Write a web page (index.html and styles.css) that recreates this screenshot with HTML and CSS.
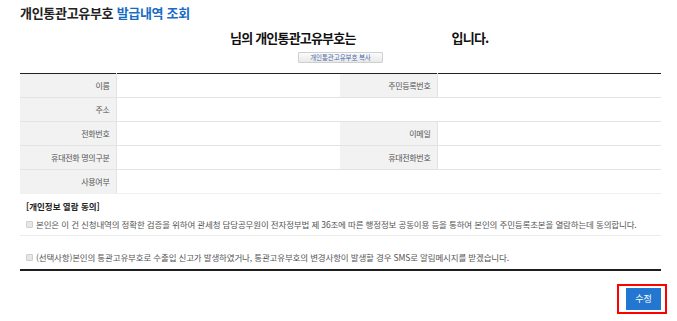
FILE: index.html
```html
<!DOCTYPE html>
<html lang="ko">
<head>
<meta charset="utf-8">
<title>개인통관고유부호 발급내역 조회</title>
<link rel="stylesheet" href="styles.css">
</head>
<body>
<div class="page">
  <h1 class="title">개인통관고유부호 <span class="title-blue">발급내역 조회</span></h1>

  <div class="summary">
    <div class="summary-line">
      <span class="summary-text">님의 개인통관고유부호는</span>
      <span class="summary-blank"></span>
      <span class="summary-text">입니다.</span>
    </div>
    <div class="copy-wrap"><button class="copy-btn" type="button">개인통관고유부호 복사</button></div>
  </div>

  <table class="info">
    <colgroup>
      <col class="col-label"><col class="col-value"><col class="col-label2"><col class="col-value">
    </colgroup>
    <tr>
      <th>이름</th><td></td>
      <th>주민등록번호</th><td></td>
    </tr>
    <tr>
      <th>주소</th><td colspan="3"></td>
    </tr>
    <tr>
      <th>전화번호</th><td></td>
      <th>이메일</th><td></td>
    </tr>
    <tr>
      <th>휴대전화 명의구분</th><td></td>
      <th>휴대전화번호</th><td></td>
    </tr>
    <tr class="last">
      <th>사용여부</th><td colspan="3"></td>
    </tr>
  </table>

  <div class="agree">
    <p class="agree-title">[개인정보 열람 동의]</p>
    <div class="agree-row agree-row-1">
      <span class="check"></span>
      <span class="agree-text">본인은 이 건 신청내역의 정확한 검증을 위하여 관세청 담당공무원이 전자정부법 제 36조에 따른 행정정보 공동이용 등을 통하여 본인의 주민등록초본을 열람하는데 동의합니다.</span>
    </div>
    <div class="agree-row agree-row-2">
      <span class="check"></span>
      <span class="agree-text">(선택사항)본인의 통관고유부호로 수출입 신고가 발생하였거나, 통관고유부호의 변경사항이 발생할 경우 SMS로 알림메시지를 받겠습니다.</span>
    </div>
  </div>

  <div class="actions">
    <span class="highlight"><button class="save-btn" type="button">수정</button></span>
  </div>
</div>
</body>
</html>
```

FILE: styles.css
```css
* { box-sizing: border-box; }

body {
  margin: 0;
  background: #fff;
  font-family: "Noto Sans CJK KR", "Noto Sans", sans-serif;
  color: #222;
}

.page {
  width: 641px;
  margin-left: 20px;
}

.title {
  margin: 0;
  padding-top: 5px;
  height: 22px;
  font-size: 13px;
  line-height: 16px;
  font-weight: 700;
  letter-spacing: -0.3px;
  color: #222;
}

.title-blue { color: #1a6bc4; }

.summary {
  height: 51px;
  padding-top: 8px;
}

.summary-line {
  display: flex;
  align-items: center;
  padding-left: 210px;
  height: 15px;
  font-size: 13px;
  line-height: 15px;
  font-weight: 700;
  letter-spacing: -0.8px;
  color: #111;
}

.summary-blank { width: 96px; }

.copy-wrap {
  padding-left: 278px;
  padding-top: 7px;
}

.copy-btn {
  display: block;
  width: 85px;
  height: 11px;
  padding: 0;
  border: 1px solid #cfcfcf;
  border-radius: 1px;
  background: linear-gradient(#fbfbfb, #e9e9e9);
  font-family: inherit;
  font-size: 6.5px;
  line-height: 9px;
  color: #4d69a8;
  letter-spacing: -0.1px;
}

.info {
  width: 641px;
  border-collapse: collapse;
  table-layout: fixed;
  border-top: 1px solid #222;
}

.col-label { width: 96px; }
.col-label2 { width: 97px; }
.col-value { width: 224px; }

.info th,
.info td {
  height: 24px;
  padding: 0;
  border-bottom: 1px solid #e3e3e3;
  font-size: 8px;
  letter-spacing: -0.3px;
}

.info th {
  background: #f2f2f2;
  border-right: 1px solid #e3e3e3;
  text-align: right;
  padding-right: 6px;
  font-weight: 400;
  color: #555;
}

.info tr.last th,
.info tr.last td { border-bottom-color: #f0f0f0; }

.agree {
  border-bottom: 2px solid #1e1e1e;
}

.agree-title {
  margin: 0;
  padding: 6px 0 0 6px;
  height: 18px;
  font-size: 8.5px;
  line-height: 12px;
  font-weight: 700;
  color: #222;
}

.agree-row {
  display: flex;
  align-items: center;
  gap: 3px;
  padding-left: 6px;
  font-size: 8.5px;
  line-height: 11px;
  color: #555;
  letter-spacing: -0.15px;
}

.agree-row-1 {
  height: 24px;
  padding-top: 1px;
  border-bottom: 1px solid #ececec;
}

.agree-row-2 {
  height: 33px;
  padding-top: 9px;
}

.check {
  width: 7px;
  height: 7px;
  flex: none;
  border: 1px solid #cfcfcf;
  background: #e6e6e6;
  border-radius: 1px;
}

.actions {
  display: flex;
  justify-content: flex-end;
  margin-right: -6px;
  padding-top: 13px;
}

.highlight {
  display: inline-flex;
  padding: 2px 4px 2px 7px;
  border: 2px solid #ff0000;
}

.save-btn {
  width: 35px;
  height: 22px;
  padding: 0;
  border: 0;
  background: #2477d0;
  color: #fff;
  font-family: inherit;
  font-size: 9px;
  line-height: 22px;
}
```
